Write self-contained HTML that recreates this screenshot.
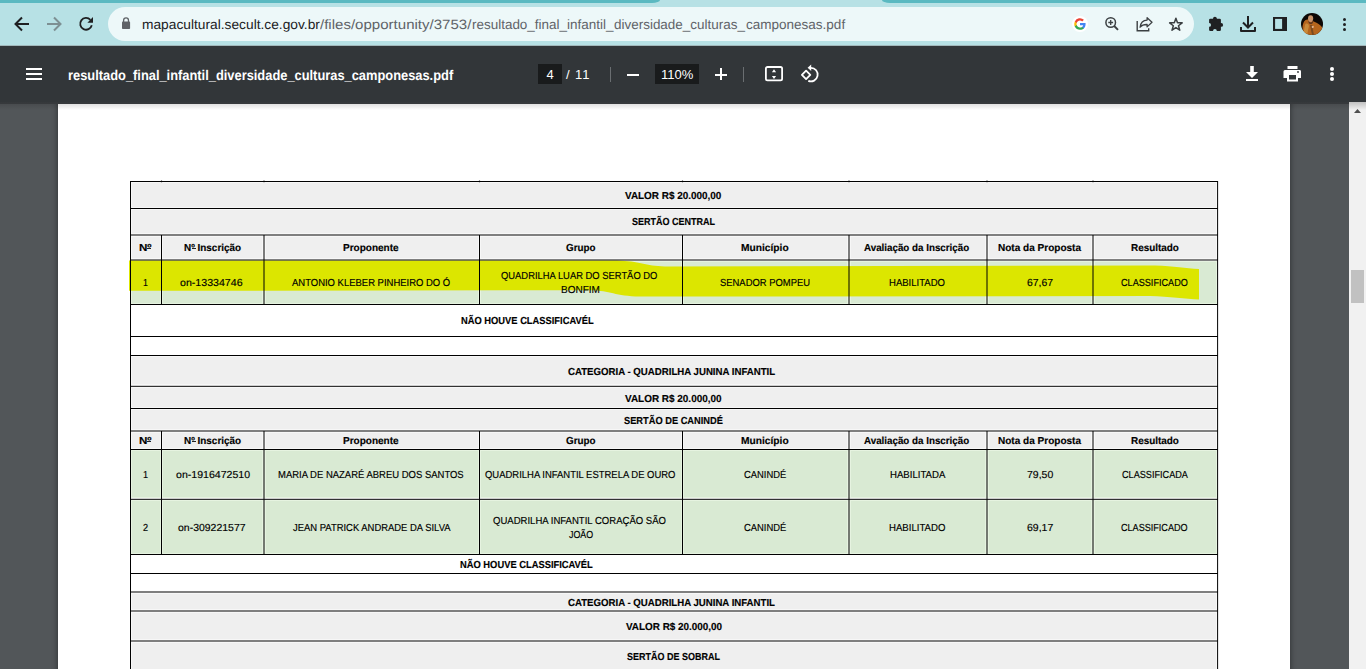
<!DOCTYPE html>
<html><head><meta charset="utf-8">
<style>
*{margin:0;padding:0;box-sizing:border-box}
html,body{width:1366px;height:669px;overflow:hidden;background:#525659;font-family:"Liberation Sans",sans-serif}
.r{position:absolute}
.t{position:absolute;white-space:nowrap;transform-origin:0 0;font-family:"Liberation Sans",sans-serif}
.b{font-weight:bold}
.g{text-rendering:geometricPrecision}
.k{-webkit-text-stroke:0.15px #000}
#tabs{position:absolute;left:0;top:0;width:1366px;height:46px;background:#b7e1e5}
#page{position:absolute;left:58px;top:0;width:1232px;height:700px;background:#fff;box-shadow:0 0 5px 1px rgba(0,0,0,.35)}
#tb{position:absolute;left:0;top:46px;width:1366px;height:56px;background:#323639;}
#tbs{position:absolute;left:0;top:102px;width:1349px;height:10px;background:linear-gradient(#35383b 0,#37393c 2px,rgba(0,0,0,.12) 2px,rgba(0,0,0,0) 8px)}
#sb{position:absolute;left:1349px;top:102px;width:17px;height:567px;background:#f1f1f1}
</style></head><body>
<div id="page"></div>
<div class="r" style="left:131px;top:182px;width:1086px;height:26px;background:#f7f7f7"></div>
<div class="r" style="left:132px;top:183px;width:1084px;height:24px;background:#efefef"></div>
<div class="r" style="left:131px;top:209px;width:1086px;height:25px;background:#f7f7f7"></div>
<div class="r" style="left:132px;top:210px;width:1084px;height:23px;background:#efefef"></div>
<div class="r" style="left:131px;top:236px;width:1086px;height:23px;background:#f7f7f7"></div>
<div class="r" style="left:132px;top:237px;width:28px;height:21px;background:#efefef"></div>
<div class="r" style="left:163px;top:237px;width:99px;height:21px;background:#efefef"></div>
<div class="r" style="left:266px;top:237px;width:212px;height:21px;background:#efefef"></div>
<div class="r" style="left:481px;top:237px;width:200px;height:21px;background:#efefef"></div>
<div class="r" style="left:684px;top:237px;width:163px;height:21px;background:#efefef"></div>
<div class="r" style="left:851px;top:237px;width:134px;height:21px;background:#efefef"></div>
<div class="r" style="left:989px;top:237px;width:102px;height:21px;background:#efefef"></div>
<div class="r" style="left:1095px;top:237px;width:121px;height:21px;background:#efefef"></div>
<div class="r" style="left:131px;top:261px;width:1086px;height:43px;background:#e6f3e0"></div>
<div class="r" style="left:132px;top:262px;width:28px;height:41px;background:#d9ead3"></div>
<div class="r" style="left:163px;top:262px;width:99px;height:41px;background:#d9ead3"></div>
<div class="r" style="left:266px;top:262px;width:212px;height:41px;background:#d9ead3"></div>
<div class="r" style="left:481px;top:262px;width:200px;height:41px;background:#d9ead3"></div>
<div class="r" style="left:684px;top:262px;width:163px;height:41px;background:#d9ead3"></div>
<div class="r" style="left:851px;top:262px;width:134px;height:41px;background:#d9ead3"></div>
<div class="r" style="left:989px;top:262px;width:102px;height:41px;background:#d9ead3"></div>
<div class="r" style="left:1095px;top:262px;width:121px;height:41px;background:#d9ead3"></div>
<div class="r" style="left:131px;top:356px;width:1086px;height:29px;background:#f7f7f7"></div>
<div class="r" style="left:132px;top:357px;width:1084px;height:27px;background:#efefef"></div>
<div class="r" style="left:131px;top:387px;width:1086px;height:21px;background:#f7f7f7"></div>
<div class="r" style="left:132px;top:388px;width:1084px;height:19px;background:#efefef"></div>
<div class="r" style="left:131px;top:409px;width:1086px;height:21px;background:#f7f7f7"></div>
<div class="r" style="left:132px;top:410px;width:1084px;height:19px;background:#efefef"></div>
<div class="r" style="left:131px;top:432px;width:1086px;height:17px;background:#f7f7f7"></div>
<div class="r" style="left:132px;top:433px;width:28px;height:15px;background:#efefef"></div>
<div class="r" style="left:163px;top:433px;width:99px;height:15px;background:#efefef"></div>
<div class="r" style="left:266px;top:433px;width:212px;height:15px;background:#efefef"></div>
<div class="r" style="left:481px;top:433px;width:200px;height:15px;background:#efefef"></div>
<div class="r" style="left:684px;top:433px;width:163px;height:15px;background:#efefef"></div>
<div class="r" style="left:851px;top:433px;width:134px;height:15px;background:#efefef"></div>
<div class="r" style="left:989px;top:433px;width:102px;height:15px;background:#efefef"></div>
<div class="r" style="left:1095px;top:433px;width:121px;height:15px;background:#efefef"></div>
<div class="r" style="left:131px;top:450px;width:1086px;height:48px;background:#e6f3e0"></div>
<div class="r" style="left:132px;top:451px;width:28px;height:46px;background:#d9ead3"></div>
<div class="r" style="left:163px;top:451px;width:99px;height:46px;background:#d9ead3"></div>
<div class="r" style="left:266px;top:451px;width:212px;height:46px;background:#d9ead3"></div>
<div class="r" style="left:481px;top:451px;width:200px;height:46px;background:#d9ead3"></div>
<div class="r" style="left:684px;top:451px;width:163px;height:46px;background:#d9ead3"></div>
<div class="r" style="left:851px;top:451px;width:134px;height:46px;background:#d9ead3"></div>
<div class="r" style="left:989px;top:451px;width:102px;height:46px;background:#d9ead3"></div>
<div class="r" style="left:1095px;top:451px;width:121px;height:46px;background:#d9ead3"></div>
<div class="r" style="left:131px;top:500px;width:1086px;height:54px;background:#e6f3e0"></div>
<div class="r" style="left:132px;top:501px;width:28px;height:52px;background:#d9ead3"></div>
<div class="r" style="left:163px;top:501px;width:99px;height:52px;background:#d9ead3"></div>
<div class="r" style="left:266px;top:501px;width:212px;height:52px;background:#d9ead3"></div>
<div class="r" style="left:481px;top:501px;width:200px;height:52px;background:#d9ead3"></div>
<div class="r" style="left:684px;top:501px;width:163px;height:52px;background:#d9ead3"></div>
<div class="r" style="left:851px;top:501px;width:134px;height:52px;background:#d9ead3"></div>
<div class="r" style="left:989px;top:501px;width:102px;height:52px;background:#d9ead3"></div>
<div class="r" style="left:1095px;top:501px;width:121px;height:52px;background:#d9ead3"></div>
<div class="r" style="left:131px;top:593px;width:1086px;height:17px;background:#f7f7f7"></div>
<div class="r" style="left:132px;top:594px;width:1084px;height:15px;background:#efefef"></div>
<div class="r" style="left:131px;top:612px;width:1086px;height:28px;background:#f7f7f7"></div>
<div class="r" style="left:132px;top:613px;width:1084px;height:26px;background:#efefef"></div>
<div class="r" style="left:131px;top:642px;width:1086px;height:57px;background:#f7f7f7"></div>
<div class="r" style="left:132px;top:643px;width:1084px;height:55px;background:#efefef"></div>
<svg class="r" style="left:0;top:0" width="1366" height="669"><path d="M129,260.5 L617,260.5 C640,261 645,266 665,266.5 L1155,265.5 C1175,266 1185,268.5 1199,269 L1199,299.5 C1185,299 1170,296.5 1150,296 L640,296.6 C615,296 610,290.5 591,290.2 L129,290.8 Z" fill="#dce600"/></svg>
<svg class="r" style="left:0;top:0" width="1366" height="669"><rect x="130" y="181.0" width="1088" height="1" fill="#000"/><rect x="130" y="208.0" width="1088" height="1" fill="#000"/><rect x="130" y="234.5" width="1088" height="1" fill="#000"/><rect x="130" y="259.5" width="1088" height="1" fill="#000"/><rect x="130" y="304.0" width="1088" height="1" fill="#000"/><rect x="130" y="336.0" width="1088" height="1" fill="#000"/><rect x="130" y="355.0" width="1088" height="1" fill="#000"/><rect x="130" y="385.8" width="1088" height="1" fill="#000"/><rect x="130" y="408.0" width="1088" height="1" fill="#000"/><rect x="130" y="430.5" width="1088" height="1" fill="#000"/><rect x="130" y="449.0" width="1088" height="1" fill="#000"/><rect x="130" y="498.8" width="1088" height="1" fill="#000"/><rect x="130" y="554.0" width="1088" height="1" fill="#000"/><rect x="130" y="573.0" width="1088" height="1" fill="#000"/><rect x="130" y="591.5" width="1088" height="1" fill="#000"/><rect x="130" y="610.5" width="1088" height="1" fill="#000"/><rect x="130" y="640.5" width="1088" height="1" fill="#000"/><rect x="161.0" y="235.0" width="1" height="25.0" fill="#000"/><rect x="263.5" y="235.0" width="1" height="25.0" fill="#000"/><rect x="479.0" y="235.0" width="1" height="25.0" fill="#000"/><rect x="682.0" y="235.0" width="1" height="25.0" fill="#000"/><rect x="848.5" y="235.0" width="1" height="25.0" fill="#000"/><rect x="986.5" y="235.0" width="1" height="25.0" fill="#000"/><rect x="1092.5" y="235.0" width="1" height="25.0" fill="#000"/><rect x="161.0" y="260.0" width="1" height="44.5" fill="#000"/><rect x="263.5" y="260.0" width="1" height="44.5" fill="#000"/><rect x="479.0" y="260.0" width="1" height="44.5" fill="#000"/><rect x="682.0" y="260.0" width="1" height="44.5" fill="#000"/><rect x="848.5" y="260.0" width="1" height="44.5" fill="#000"/><rect x="986.5" y="260.0" width="1" height="44.5" fill="#000"/><rect x="1092.5" y="260.0" width="1" height="44.5" fill="#000"/><rect x="161.0" y="431.0" width="1" height="18.5" fill="#000"/><rect x="263.5" y="431.0" width="1" height="18.5" fill="#000"/><rect x="479.0" y="431.0" width="1" height="18.5" fill="#000"/><rect x="682.0" y="431.0" width="1" height="18.5" fill="#000"/><rect x="848.5" y="431.0" width="1" height="18.5" fill="#000"/><rect x="986.5" y="431.0" width="1" height="18.5" fill="#000"/><rect x="1092.5" y="431.0" width="1" height="18.5" fill="#000"/><rect x="161.0" y="449.5" width="1" height="49.80000000000001" fill="#000"/><rect x="263.5" y="449.5" width="1" height="49.80000000000001" fill="#000"/><rect x="479.0" y="449.5" width="1" height="49.80000000000001" fill="#000"/><rect x="682.0" y="449.5" width="1" height="49.80000000000001" fill="#000"/><rect x="848.5" y="449.5" width="1" height="49.80000000000001" fill="#000"/><rect x="986.5" y="449.5" width="1" height="49.80000000000001" fill="#000"/><rect x="1092.5" y="449.5" width="1" height="49.80000000000001" fill="#000"/><rect x="161.0" y="499.3" width="1" height="55.19999999999999" fill="#000"/><rect x="263.5" y="499.3" width="1" height="55.19999999999999" fill="#000"/><rect x="479.0" y="499.3" width="1" height="55.19999999999999" fill="#000"/><rect x="682.0" y="499.3" width="1" height="55.19999999999999" fill="#000"/><rect x="848.5" y="499.3" width="1" height="55.19999999999999" fill="#000"/><rect x="986.5" y="499.3" width="1" height="55.19999999999999" fill="#000"/><rect x="1092.5" y="499.3" width="1" height="55.19999999999999" fill="#000"/><rect x="160.9" y="180.6" width="1.2" height="1.6" fill="#000"/><rect x="263.4" y="180.6" width="1.2" height="1.6" fill="#000"/><rect x="478.9" y="180.6" width="1.2" height="1.6" fill="#000"/><rect x="681.9" y="180.6" width="1.2" height="1.6" fill="#000"/><rect x="848.4" y="180.6" width="1.2" height="1.6" fill="#000"/><rect x="986.4" y="180.6" width="1.2" height="1.6" fill="#000"/><rect x="1092.4" y="180.6" width="1.2" height="1.6" fill="#000"/><rect x="130.0" y="181" width="1" height="490" fill="#000"/><rect x="1217.1" y="181" width="1" height="490" fill="#000"/></svg>
<div class="t g k b" style="left:625.4px;top:192px;font-size:10.2px;line-height:10.2px;transform:scaleX(0.9742);color:#000;">VALOR R$ 20.000,00</div>
<div class="t g k b" style="left:632.1px;top:218px;font-size:10.2px;line-height:10.2px;transform:scaleX(0.8845);color:#000;">SERTÃO CENTRAL</div>
<div class="r" style="left:147px;top:248px;width:4px;height:1px;background:#222"></div>
<div class="r" style="left:192px;top:248px;width:4px;height:1px;background:#222"></div>
<div class="t g k b" style="left:138.8px;top:244px;font-size:10.2px;line-height:10.2px;transform:scaleX(1.1374);color:#000;">Nº</div>
<div class="t g k b" style="left:183.6px;top:244px;font-size:10.2px;line-height:10.2px;transform:scaleX(0.9735);color:#000;">Nº Inscrição</div>
<div class="t g k b" style="left:343.2px;top:244px;font-size:10.2px;line-height:10.2px;transform:scaleX(0.9824);color:#000;">Proponente</div>
<div class="t g k b" style="left:565.6px;top:244px;font-size:10.2px;line-height:10.2px;transform:scaleX(0.9657);color:#000;">Grupo</div>
<div class="t g k b" style="left:740.9px;top:244px;font-size:10.2px;line-height:10.2px;transform:scaleX(1.0018);color:#000;">Município</div>
<div class="t g k b" style="left:864.4px;top:244px;font-size:10.2px;line-height:10.2px;transform:scaleX(0.9606);color:#000;">Avaliação da Inscrição</div>
<div class="t g k b" style="left:998.3px;top:244px;font-size:10.2px;line-height:10.2px;transform:scaleX(0.9841);color:#000;">Nota da Proposta</div>
<div class="t g k b" style="left:1130.8px;top:244px;font-size:10.2px;line-height:10.2px;transform:scaleX(0.9726);color:#000;">Resultado</div>
<div class="t g k" style="left:143.0px;top:279px;font-size:10.2px;line-height:10.2px;transform:scaleX(0.8639);color:#000;">1</div>
<div class="t g k" style="left:180.4px;top:279px;font-size:10.2px;line-height:10.2px;transform:scaleX(1.0414);color:#000;">on-13334746</div>
<div class="t g k" style="left:292.4px;top:279px;font-size:10.2px;line-height:10.2px;transform:scaleX(0.9295);color:#000;">ANTONIO KLEBER PINHEIRO DO Ó</div>
<div class="t g k" style="left:500.8px;top:272px;font-size:10.2px;line-height:10.2px;transform:scaleX(0.9219);color:#000;">QUADRILHA LUAR DO SERTÃO DO</div>
<div class="t g k" style="left:561.2px;top:286px;font-size:10.2px;line-height:10.2px;transform:scaleX(0.9821);color:#000;">BONFIM</div>
<div class="t g k" style="left:719.8px;top:279px;font-size:10.2px;line-height:10.2px;transform:scaleX(0.9243);color:#000;">SENADOR POMPEU</div>
<div class="t g k" style="left:888.9px;top:279px;font-size:10.2px;line-height:10.2px;transform:scaleX(0.9360);color:#000;">HABILITADO</div>
<div class="t g k" style="left:1026.7px;top:279px;font-size:10.2px;line-height:10.2px;transform:scaleX(1.0190);color:#000;">67,67</div>
<div class="t g k" style="left:1120.9px;top:279px;font-size:10.2px;line-height:10.2px;transform:scaleX(0.8938);color:#000;">CLASSIFICADO</div>
<div class="t g k b" style="left:460.5px;top:317px;font-size:10.2px;line-height:10.2px;transform:scaleX(0.9163);color:#000;">NÃO HOUVE CLASSIFICAVÉL</div>
<div class="t g k b" style="left:568.3px;top:368px;font-size:10.2px;line-height:10.2px;transform:scaleX(0.9468);color:#000;">CATEGORIA - QUADRILHA JUNINA INFANTIL</div>
<div class="t g k b" style="left:625.4px;top:395px;font-size:10.2px;line-height:10.2px;transform:scaleX(0.9762);color:#000;">VALOR R$ 20.000,00</div>
<div class="t g k b" style="left:624.1px;top:417px;font-size:10.2px;line-height:10.2px;transform:scaleX(0.9099);color:#000;">SERTÃO DE CANINDÉ</div>
<div class="r" style="left:147px;top:441px;width:4px;height:1px;background:#222"></div>
<div class="r" style="left:192px;top:441px;width:4px;height:1px;background:#222"></div>
<div class="t g k b" style="left:138.8px;top:437px;font-size:10.2px;line-height:10.2px;transform:scaleX(1.1374);color:#000;">Nº</div>
<div class="t g k b" style="left:183.6px;top:437px;font-size:10.2px;line-height:10.2px;transform:scaleX(0.9735);color:#000;">Nº Inscrição</div>
<div class="t g k b" style="left:343.2px;top:437px;font-size:10.2px;line-height:10.2px;transform:scaleX(0.9824);color:#000;">Proponente</div>
<div class="t g k b" style="left:565.6px;top:437px;font-size:10.2px;line-height:10.2px;transform:scaleX(0.9657);color:#000;">Grupo</div>
<div class="t g k b" style="left:740.9px;top:437px;font-size:10.2px;line-height:10.2px;transform:scaleX(1.0018);color:#000;">Município</div>
<div class="t g k b" style="left:864.4px;top:437px;font-size:10.2px;line-height:10.2px;transform:scaleX(0.9606);color:#000;">Avaliação da Inscrição</div>
<div class="t g k b" style="left:998.3px;top:437px;font-size:10.2px;line-height:10.2px;transform:scaleX(0.9841);color:#000;">Nota da Proposta</div>
<div class="t g k b" style="left:1130.8px;top:437px;font-size:10.2px;line-height:10.2px;transform:scaleX(0.9726);color:#000;">Resultado</div>
<div class="t g k" style="left:142.8px;top:471px;font-size:10.2px;line-height:10.2px;transform:scaleX(0.8992);color:#000;">1</div>
<div class="t g k" style="left:175.6px;top:471px;font-size:10.2px;line-height:10.2px;transform:scaleX(1.0370);color:#000;">on-1916472510</div>
<div class="t g k" style="left:278.1px;top:471px;font-size:10.2px;line-height:10.2px;transform:scaleX(0.9301);color:#000;">MARIA DE NAZARÉ ABREU DOS SANTOS</div>
<div class="t g k" style="left:485.0px;top:471px;font-size:10.2px;line-height:10.2px;transform:scaleX(0.9286);color:#000;">QUADRILHA INFANTIL ESTRELA DE OURO</div>
<div class="t g k" style="left:743.7px;top:471px;font-size:10.2px;line-height:10.2px;transform:scaleX(0.9224);color:#000;">CANINDÉ</div>
<div class="t g k" style="left:889.5px;top:471px;font-size:10.2px;line-height:10.2px;transform:scaleX(0.9437);color:#000;">HABILITADA</div>
<div class="t g k" style="left:1026.6px;top:471px;font-size:10.2px;line-height:10.2px;transform:scaleX(1.0307);color:#000;">79,50</div>
<div class="t g k" style="left:1121.7px;top:471px;font-size:10.2px;line-height:10.2px;transform:scaleX(0.8953);color:#000;">CLASSIFICADA</div>
<div class="t g k" style="left:142.8px;top:524px;font-size:10.2px;line-height:10.2px;transform:scaleX(0.8992);color:#000;">2</div>
<div class="t g k" style="left:178.2px;top:524px;font-size:10.2px;line-height:10.2px;transform:scaleX(1.0276);color:#000;">on-309221577</div>
<div class="t g k" style="left:292.7px;top:524px;font-size:10.2px;line-height:10.2px;transform:scaleX(0.9256);color:#000;">JEAN PATRICK ANDRADE DA SILVA</div>
<div class="t g k" style="left:492.5px;top:517px;font-size:10.2px;line-height:10.2px;transform:scaleX(0.9364);color:#000;">QUADRILHA INFANTIL CORAÇÃO SÃO</div>
<div class="t g k" style="left:568.5px;top:531px;font-size:10.2px;line-height:10.2px;transform:scaleX(0.8726);color:#000;">JOÃO</div>
<div class="t g k" style="left:743.7px;top:524px;font-size:10.2px;line-height:10.2px;transform:scaleX(0.9224);color:#000;">CANINDÉ</div>
<div class="t g k" style="left:888.5px;top:524px;font-size:10.2px;line-height:10.2px;transform:scaleX(0.9427);color:#000;">HABILITADO</div>
<div class="t g k" style="left:1026.6px;top:524px;font-size:10.2px;line-height:10.2px;transform:scaleX(1.0307);color:#000;">69,17</div>
<div class="t g k" style="left:1121.0px;top:524px;font-size:10.2px;line-height:10.2px;transform:scaleX(0.8912);color:#000;">CLASSIFICADO</div>
<div class="t g k b" style="left:460.2px;top:561px;font-size:10.2px;line-height:10.2px;transform:scaleX(0.9176);color:#000;">NÃO HOUVE CLASSIFICAVÉL</div>
<div class="t g k b" style="left:568.4px;top:599px;font-size:10.2px;line-height:10.2px;transform:scaleX(0.9459);color:#000;">CATEGORIA - QUADRILHA JUNINA INFANTIL</div>
<div class="t g k b" style="left:625.5px;top:623px;font-size:10.2px;line-height:10.2px;transform:scaleX(0.9712);color:#000;">VALOR R$ 20.000,00</div>
<div class="t g k b" style="left:626.8px;top:653px;font-size:10.2px;line-height:10.2px;transform:scaleX(0.8833);color:#000;">SERTÃO DE SOBRAL</div>
<div id="sb"><div class="r" style="left:2px;top:168px;width:13px;height:33px;background:#c1c1c1"></div>
<svg class="r" style="left:0;top:0" width="17" height="17"><path d="M5,11 L8.5,7 L12,11 Z" fill="#505050"/></svg></div>
<div id="tbs"></div>
<div class="r" style="left:1349px;top:102px;width:17px;height:8px;background:linear-gradient(rgba(0,0,0,.2),rgba(0,0,0,0))"></div>
<div id="tb">
  <!-- hamburger -->
  <div class="r" style="left:26px;top:22px;width:16px;height:2px;background:#fff"></div>
  <div class="r" style="left:26px;top:27px;width:16px;height:2px;background:#fff"></div>
  <div class="r" style="left:26px;top:32px;width:16px;height:2px;background:#fff"></div>
  <div class="t b g" id="title" style="left:68px;top:22.4px;font-size:14px;line-height:14px;color:#fff;transform:scaleX(0.9185)">resultado_final_infantil_diversidade_culturas_camponesas.pdf</div>
  <div class="r" style="left:538px;top:18px;width:24px;height:20px;background:#191b1c"></div>
  <div class="t" style="left:546.5px;top:21px;font-size:13px;line-height:16px;color:#fff">4</div>
  <div class="t" style="left:566px;top:21px;font-size:13px;line-height:16px;color:#fff">/</div><div class="t" style="left:575px;top:21px;font-size:13px;line-height:16px;color:#fff;letter-spacing:1px">11</div>
  <div class="r" style="left:610px;top:21px;width:1px;height:15px;background:#6a6e71"></div>
  <div class="r" style="left:627px;top:28px;width:12px;height:2px;background:#fff"></div>
  <div class="r" style="left:655px;top:18px;width:44px;height:20px;background:#191b1c"></div>
  <div class="t" style="left:661px;top:21px;font-size:13px;line-height:16px;color:#fff">110%</div>
  <div class="r" style="left:715px;top:28px;width:12px;height:2px;background:#fff"></div>
  <div class="r" style="left:720px;top:22px;width:2px;height:12px;background:#fff"></div>
  <div class="r" style="left:743px;top:21px;width:1px;height:15px;background:#6a6e71"></div>
  <svg class="r" style="left:755px;top:14px" width="35" height="30" viewBox="0 0 35 30">
    <rect x="10.9" y="7" width="16.2" height="13.4" rx="1.6" fill="none" stroke="#fff" stroke-width="1.8"/>
    <path d="M16.9 12.3 L19 9.2 L21.1 12.3 Z M16.9 16 L19 19.1 L21.1 16 Z" fill="#fff"/>
  </svg>
  <svg class="r" style="left:790px;top:14px" width="35" height="30" viewBox="0 0 35 30">
    <path d="M16.1 10.7 L20.3 14.9 L16.1 19.1 L11.9 14.9 Z" fill="none" stroke="#fff" stroke-width="1.8" stroke-linejoin="round"/>
    <path d="M20.9 7.8 A6.8 6.8 0 1 1 18.3 20.9" fill="none" stroke="#fff" stroke-width="1.8"/>
    <path d="M17.6 7.8 L21.2 4.6 L21.2 11 Z" fill="#fff"/>
  </svg>
  <!-- download -->
  <svg class="r" style="left:1242px;top:16px" width="20" height="20" viewBox="0 0 20 20">
    <path d="M8.2 4 H11.8 V10 H16 L10 16 L4 10 H8.2 Z" fill="#fff"/>
    <rect x="4" y="17" width="12" height="2" fill="#fff"/>
  </svg>
  <svg class="r" style="left:1282px;top:18px" width="20" height="20" viewBox="0 0 20 20">
    <rect x="5.5" y="2" width="10" height="3" fill="#fff"/>
    <path d="M3 6 H18 Q19 6 19 7.5 V14 H16 V17.5 H5 V14 H1.5 V7.5 Q1.5 6 3 6 Z" fill="#fff"/>
    <rect x="7" y="11" width="7" height="4.5" fill="#323639"/>
    <circle cx="16" cy="8" r="0.9" fill="#323639"/>
  </svg>
  <div class="r" style="left:1330px;top:21px;width:4px;height:4px;border-radius:2px;background:#fff"></div>
  <div class="r" style="left:1330px;top:26px;width:4px;height:4px;border-radius:2px;background:#fff"></div>
  <div class="r" style="left:1330px;top:31px;width:4px;height:4px;border-radius:2px;background:#fff"></div>
</div>
<div id="tabs">
  <div class="r" style="left:0;top:0;width:660px;height:3px;background:#5bb9c1;border-bottom-right-radius:8px 3px"></div>
  <div class="r" style="left:882px;top:0;width:484px;height:3px;background:#5bb9c1;border-bottom-left-radius:8px 3px"></div>
  <div class="r" style="left:108px;top:7px;width:1086px;height:34px;border-radius:17px;background:#edf8f9"></div>
  <div class="r" style="left:0;top:45px;width:1366px;height:1px;background:#a2b8bb"></div>
  <!-- back -->
  <svg class="r" style="left:12px;top:14px" width="20" height="20" viewBox="0 0 20 20">
    <path d="M17 10 H4 M10 3.5 L3.5 10 L10 16.5" fill="none" stroke="#1f2022" stroke-width="2"/>
  </svg>
  <svg class="r" style="left:44px;top:14px" width="20" height="20" viewBox="0 0 20 20">
    <path d="M3 10 H16 M10 3.5 L16.5 10 L10 16.5" fill="none" stroke="#7d9093" stroke-width="2"/>
  </svg>
  <svg class="r" style="left:70px;top:10px" width="30" height="30" viewBox="0 0 30 30">
    <path d="M21.8 15.3 A5.9 5.9 0 1 1 20.4 9.8" fill="none" stroke="#1f2022" stroke-width="1.8"/>
    <path d="M23 7.1 V12.7 H17.4 Z" fill="#1f2022"/>
  </svg>
  <svg class="r" style="left:116px;top:12px" width="20" height="20" viewBox="0 0 20 20">
    <path d="M7.6 10 V8.4 A2.45 2.45 0 0 1 12.5 8.4 V10" fill="none" stroke="#5f6368" stroke-width="1.3"/>
    <rect x="6" y="9.6" width="8.1" height="7.4" rx="0.8" fill="#5f6368"/>
  </svg>
  <div class="t g" style="left:142.0px;top:18px;font-size:13.5px;line-height:13.5px;color:#202124;transform:scaleX(1.0190)">mapacultural.secult.ce.gov.br</div>
  <div class="t g" style="left:320.0px;top:18px;font-size:13.5px;line-height:13.5px;color:#5f6368;transform:scaleX(1.1146)">/files/opportunity/3753/</div>
  <div class="t g" style="left:472.0px;top:18px;font-size:13.5px;line-height:13.5px;color:#5f6368;transform:scaleX(0.9968)">resultado_final_infantil_</div>
  <div class="t g" style="left:614.0px;top:18px;font-size:13.5px;line-height:13.5px;color:#5f6368;transform:scaleX(0.9968)">diversidade_culturas_</div>
  <div class="t g" style="left:745.5px;top:18px;font-size:13.5px;line-height:13.5px;color:#5f6368;transform:scaleX(1.0008)">camponesas.pdf</div>
  <!-- G -->
  <svg class="r" style="left:1072px;top:16px" width="16" height="16" viewBox="0 0 16 16">
    <circle cx="8" cy="8" r="8" fill="#fff"/>
    <path d="M13.6 8.1c0-.4 0-.8-.1-1.2H8v2.3h3.2a2.7 2.7 0 0 1-1.2 1.8v1.5h1.9c1.1-1 1.7-2.6 1.7-4.4z" fill="#4285f4"/>
    <path d="M8 13.8c1.6 0 2.9-.5 3.9-1.4L10 10.9c-.5.4-1.2.6-2 .6-1.5 0-2.8-1-3.3-2.4H2.8v1.5A5.8 5.8 0 0 0 8 13.8z" fill="#34a853"/>
    <path d="M4.7 9.1a3.5 3.5 0 0 1 0-2.2V5.4H2.8a5.8 5.8 0 0 0 0 5.2z" fill="#fbbc05"/>
    <path d="M8 4.5c.9 0 1.6.3 2.2.9l1.7-1.7A5.8 5.8 0 0 0 2.8 5.4l1.9 1.5C5.2 5.5 6.5 4.5 8 4.5z" fill="#ea4335"/>
  </svg>
  <!-- zoom/share/star -->
  <svg class="r" style="left:1100px;top:12px" width="90" height="24" viewBox="0 0 90 24">
    <circle cx="10.7" cy="10.5" r="4.8" fill="none" stroke="#3c4043" stroke-width="1.5"/>
    <path d="M8.3 10.5 H13.1 M10.7 8.1 V12.9" stroke="#3c4043" stroke-width="1.3"/>
    <path d="M14.2 14 L18 17.9" stroke="#3c4043" stroke-width="1.9"/>
    <path d="M37.2 8.9 V18.8 H48.7 V16.3" fill="none" stroke="#3c4043" stroke-width="1.4"/>
    <path d="M40.1 15.2 C40.6 10.8 43.6 8.2 47.1 8.1 V5.7 L52 10.3 L47.1 14.9 V12.5 C44.6 12.4 41.8 13.2 40.1 15.2 Z" fill="none" stroke="#3c4043" stroke-width="1.3" stroke-linejoin="round"/>
    <path d="M75.90,6.30 L77.49,10.72 L82.18,10.86 L78.47,13.73 L79.78,18.24 L75.90,15.60 L72.02,18.24 L73.33,13.73 L69.62,10.86 L74.31,10.72 Z" fill="none" stroke="#3c4043" stroke-width="1.5" stroke-linejoin="round"/>
  </svg>
  <!-- puzzle -->
  <svg class="r" style="left:1204px;top:12px" width="24" height="24" viewBox="0 0 24 24">
    <rect x="5.1" y="6.8" width="11.8" height="12.2" rx="1.2" fill="#1f2022"/>
    <circle cx="10.9" cy="6.6" r="1.9" fill="#1f2022"/>
    <circle cx="17.2" cy="12.9" r="1.9" fill="#1f2022"/>
    <circle cx="5.1" cy="12.9" r="1.9" fill="#b7e1e5"/>
    <circle cx="10.9" cy="19" r="1.9" fill="#b7e1e5"/>
  </svg>
  <!-- download -->
  <svg class="r" style="left:1238px;top:14px" width="20" height="20" viewBox="0 0 20 20">
    <path d="M10 2 V13 M5 8.5 L10 13.5 L15 8.5" fill="none" stroke="#1f2022" stroke-width="2"/>
    <path d="M3 13 V17 H17 V13" fill="none" stroke="#1f2022" stroke-width="2" stroke-linejoin="round"/>
  </svg>
  <!-- sidebar -->
  <svg class="r" style="left:1266px;top:10px" width="24" height="24" viewBox="0 0 24 24">
    <rect x="7" y="7" width="14" height="14" fill="#1f2022"/>
    <rect x="9.1" y="8.9" width="7" height="10" fill="#b7e1e5"/>
  </svg>
  <!-- avatar -->
  <svg class="r" style="left:1301px;top:12.8px" width="22" height="22" viewBox="0 0 22 22">
    <defs><clipPath id="av"><circle cx="11" cy="11" r="11"/></clipPath></defs>
    <g clip-path="url(#av)">
      <rect width="22" height="22" fill="#0d0806"/>
      <path d="M2 22 L1.5 14 C2 9 4 6 7 6.5 C9 8 12 7.5 15 9.5 C18 11 21 13 22 16 L22 22 Z" fill="#b5651d"/>
      <path d="M4 12 C5 10 7 10 8 13 L6 22 L2 22 Z" fill="#c98a3a"/>
      <path d="M9 12 L11 22 L13 22 L11 12 Z" fill="#7a4a20"/>
      <ellipse cx="9.6" cy="5.6" rx="2.6" ry="3.4" fill="#c9936b"/>
      <path d="M7.4 6.5 C7.8 10 11 10.8 12.2 7 L12 9.5 C11 11.5 8.5 11.5 7.6 9.5 Z" fill="#5a3620"/>
      <path d="M10.6 13.5 L12.5 12.8 L12.8 14.5 L11 15 Z" fill="#e8c0a0"/>
    </g>
  </svg>
  <div class="r" style="left:1342.7px;top:17.7px;width:3.4px;height:3.4px;border-radius:50%;background:#1f2022"></div>
  <div class="r" style="left:1342.7px;top:22.8px;width:3.4px;height:3.4px;border-radius:50%;background:#1f2022"></div>
  <div class="r" style="left:1342.7px;top:27.8px;width:3.4px;height:3.4px;border-radius:50%;background:#1f2022"></div>
</div>
</body></html>
